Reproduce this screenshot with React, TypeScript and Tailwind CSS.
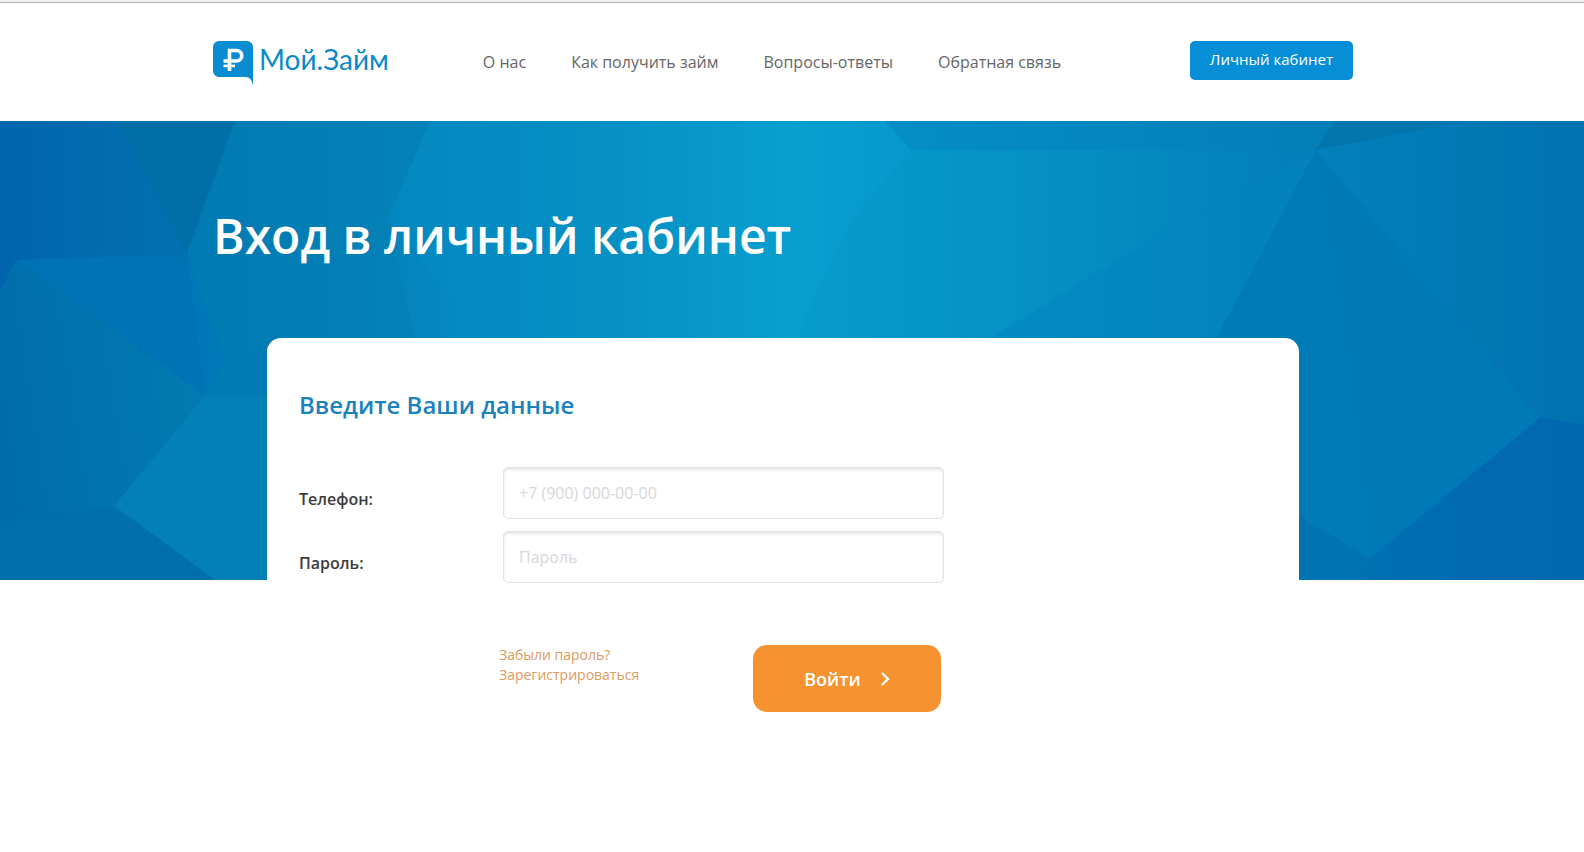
import React from 'react'

const navItems = ['О нас', 'Как получить займ', 'Вопросы-ответы', 'Обратная связь']

function Logo() {
	return (
		<a href="#" className="flex items-start text-[#0a8ac8]">
			<svg viewBox="0 0 40 45" className="w-10 h-[45px] mr-1.5 shrink-0" aria-hidden="true">
				<path
					d="M6 0h28a6 6 0 0 1 6 6v39c-1-6-3-9-8-9H6a6 6 0 0 1-6-6V6a6 6 0 0 1 6-6z"
					fill="#0a8dd0"
				/>
				<path
					d="M16.500 30V9.500h7a5.250 5.250 0 0 1 0 10.500H10.500"
					fill="none"
					stroke="#fff"
					strokeWidth="3.600"
				/>
				<path d="M10.500 24.900h11.500" fill="none" stroke="#fff" strokeWidth="2.600" />
			</svg>
			<span className="font-['Lato','Open_Sans',sans-serif] text-[28px] leading-9">
				Мой.Займ
			</span>
		</a>
	)
}

// Low-poly backdrop, stretched over the whole hero
function HeroBackground() {
	return (
		<svg
			viewBox="0 0 1584 459"
			preserveAspectRatio="none"
			className="absolute inset-0 w-full h-full"
			aria-hidden="true"
		>
			<defs>
				<linearGradient id="base" x1="0" x2="1584" y1="0" y2="0" gradientUnits="userSpaceOnUse">
					<stop offset="0" stopColor="#0067ad" />
					<stop offset="0.130" stopColor="#0074b2" />
					<stop offset="0.260" stopColor="#0489c1" />
					<stop offset="0.380" stopColor="#0690c4" />
					<stop offset="0.450" stopColor="#0898c9" />
					<stop offset="0.500" stopColor="#089fcf" />
					<stop offset="0.570" stopColor="#0799cd" />
					<stop offset="0.660" stopColor="#0590c4" />
					<stop offset="0.760" stopColor="#0384bd" />
					<stop offset="0.840" stopColor="#027bb7" />
					<stop offset="1" stopColor="#0070b0" />
				</linearGradient>
				<linearGradient id="leftTop" x1="0" x2="1" y1="0" y2="0">
					<stop offset="0" stopColor="#0065ac" />
					<stop offset="1" stopColor="#0271b0" />
				</linearGradient>
				<linearGradient id="leftLow" x1="0" x2="1" y1="0.600" y2="0.400">
					<stop offset="0" stopColor="#006dab" />
					<stop offset="1" stopColor="#037bb1" />
				</linearGradient>
				<linearGradient id="mid" x1="0" x2="1" y1="0" y2="0">
					<stop offset="0" stopColor="#027ab3" />
					<stop offset="1" stopColor="#0482b7" />
				</linearGradient>
				<linearGradient id="slope" x1="0" x2="1" y1="0" y2="0">
					<stop offset="0" stopColor="#0483bc" />
					<stop offset="1" stopColor="#058fc5" />
				</linearGradient>
				<linearGradient id="teal" x1="0" x2="1" y1="0" y2="0">
					<stop offset="0" stopColor="#0699c9" />
					<stop offset="0.500" stopColor="#0590c1" />
					<stop offset="1" stopColor="#037fba" />
				</linearGradient>
				<linearGradient id="strip" x1="0" x2="1" y1="0" y2="0">
					<stop offset="0" stopColor="#058ec6" />
					<stop offset="1" stopColor="#037eb7" />
				</linearGradient>
				<linearGradient id="right" x1="0" x2="1" y1="0" y2="0">
					<stop offset="0" stopColor="#0380bb" />
					<stop offset="0.600" stopColor="#0278b3" />
					<stop offset="1" stopColor="#0072b0" />
				</linearGradient>
				<linearGradient id="corner" x1="0" x2="1" y1="0" y2="0">
					<stop offset="0" stopColor="#0072b2" />
					<stop offset="0.600" stopColor="#0069b0" />
					<stop offset="1" stopColor="#0069ae" />
				</linearGradient>
			</defs>
			<rect width="1584" height="459" fill="url(#base)" />
			<path d="M0 0H118L187 133L16 139L0 170Z" fill="url(#leftTop)" />
			<path d="M118 0H235L187 133Z" fill="#006fa7" />
			<path d="M235 0H430L388 97L187 133Z" fill="url(#mid)" />
			<path d="M187 133L388 97L425 260H267V290L205 275Z" fill="url(#mid)" />
			<path d="M388 97L520 260H425Z" fill="url(#slope)" />
			<path d="M16 139L187 133L205 275Z" fill="#0073b5" />
			<path d="M187 133L225 240L205 275Z" fill="#0077b7" />
			<path d="M205 275L280 210V275Z" fill="#027ab3" />
			<path d="M165 275H280V459H215L114 385Z" fill="#0380b5" />
			<path d="M16 139L205 275L114 385L0 400V170Z" fill="url(#leftLow)" />
			<path d="M114 385L215 459H0V400Z" fill="#0070ab" />
			<path d="M911 29H1316L1140 125L970 230H790L850 100Z" fill="url(#teal)" opacity="0.600" />
			<path d="M885 0H1335L1316 29H911Z" fill="url(#strip)" />
			<path d="M970 230L1140 125L1316 29L1210 230Z" fill="#0385c0" opacity="0.600" />
			<path d="M1316 29L1540 297L1370 437L1290 390V230H1210Z" fill="#0079b7" />
			<path d="M1316 29L1350 260L1370 437L1290 390V230H1210Z" fill="#007dba" opacity="0.500" />
			<path d="M1316 29L1465 0H1584V303L1540 297Z" fill="url(#right)" />
			<path d="M1316 29L1335 0H1465Z" fill="#0375ad" />
			<path d="M1540 297L1584 303V459H1345L1370 437Z" fill="url(#corner)" />
			<path d="M1290 390L1370 437L1345 459H1290Z" fill="#0074b2" />
		</svg>
	)
}

const inputClass =
	'w-full h-[52px] px-[15px] rounded-[5px] border border-[#e2e2e2] bg-white text-base text-[#444] placeholder:text-[#d8d8d8] shadow-[inset_0_2px_3px_rgba(0,0,0,0.1)] outline-none'

export default function App() {
	return (
		<div className="min-h-screen bg-white font-['Open_Sans','Noto_Sans',sans-serif] text-[#444]">
			<div className="h-[3px] bg-[#efefef] border-b border-[#b0b0b0]" />

			{/* Header */}
			<header className="pl-4 pr-[34px]">
				<div className="flex items-start justify-between h-[118px] pt-[38px] max-w-[1140px] mx-auto">
					<div className="flex items-start">
						<Logo />
						<nav className="flex gap-[45px] ml-[94px] pt-[9px] text-base leading-6 text-[#666]">
							{navItems.map((item) => (
								<a key={item} href="#" className="whitespace-nowrap">
									{item}
								</a>
							))}
						</nav>
					</div>
					<button className="h-[39px] px-5 pb-0.5 rounded-[5px] bg-[#068fd6] text-[15px] text-white whitespace-nowrap">
						Личный кабинет
					</button>
				</div>
			</header>

			{/* Hero and login form */}
			<main className="relative">
				<div className="absolute inset-x-0 top-0 h-[459px]">
					<HeroBackground />
				</div>
				<div className="relative pl-4 pr-[34px] pt-[83px]">
					<h1 className="max-w-[1140px] mx-auto text-5xl leading-[64px] font-semibold text-white">
						Вход в личный кабинет
					</h1>
					<form className="max-w-[1032px] min-h-[500px] mx-auto mt-[70px] px-8 pt-[47px] bg-white rounded-t-[14px]">
						<h2 className="text-2xl leading-10 font-semibold text-[#1b82bb]">
							Введите Ваши данные
						</h2>
						<div className="grid grid-cols-[204px_441px] gap-y-3 mt-[42px] text-base">
							<label htmlFor="phone" className="pt-5 text-[#3c3c3c] font-semibold">
								Телефон:
							</label>
							<input id="phone" type="tel" placeholder="+7 (900) 000-00-00" className={inputClass} />
							<label htmlFor="password" className="pt-5 text-[#3c3c3c] font-semibold">
								Пароль:
							</label>
							<input id="password" type="password" placeholder="Пароль" className={inputClass} />
						</div>
						<div className="flex items-start justify-between w-[442px] ml-[200px] mt-[62px]">
							<div className="flex flex-col items-start text-sm leading-5 text-[#dd9a62]">
								<a href="#">Забыли пароль?</a>
								<a href="#">Зарегистрироваться</a>
							</div>
							<button
								type="submit"
								className="flex items-center justify-center gap-5 w-[188px] h-[67px] rounded-[14px] bg-[#f6922f] text-lg font-semibold text-white"
							>
								Войти
								<svg viewBox="0 0 9 14" className="w-[9px] h-3.5" aria-hidden="true">
									<path d="M1 1l6 6l-6 6" fill="none" stroke="#fff" strokeWidth="2.400" />
								</svg>
							</button>
						</div>
					</form>
				</div>
			</main>
		</div>
	)
}
